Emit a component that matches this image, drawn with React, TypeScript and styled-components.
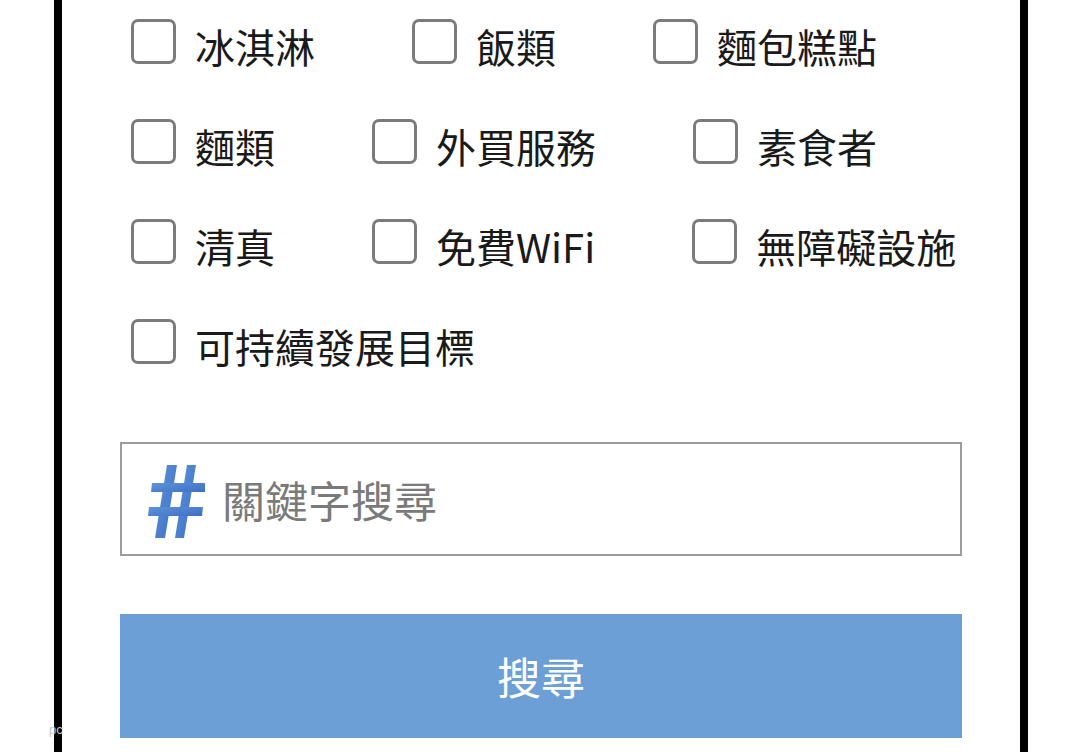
import React from "react";
import styled, { createGlobalStyle } from "styled-components";

const GlobalStyle = createGlobalStyle`
  html, body {
    margin: 0;
    padding: 0;
    background: #ffffff;
  }
  body {
    font-family: "Noto Sans CJK TC", "Noto Sans", sans-serif;
    overflow: hidden;
  }
  * { box-sizing: border-box; }
`;

const Page = styled.div`
  position: relative;
  width: 1080px;
  height: 752px;
  overflow: hidden;
`;

const Frame = styled.div`
  margin-left: 54px;
  width: 974px;
  min-height: 752px;
  border-left: 8px solid #000;
  border-right: 8px solid #000;
  padding: 19px 58px 0;
`;

const OptionList = styled.div`
  display: flex;
  flex-wrap: wrap;
  row-gap: 55px;
  column-gap: 97px;
  padding-left: 11px;
`;

const Option = styled.label`
  display: flex;
  align-items: center;
  gap: 19px;
  height: 45px;
  cursor: pointer;
`;

const Box = styled.span`
  display: block;
  flex: none;
  width: 45px;
  height: 45px;
  border: 3px solid #7b7b7b;
  border-radius: 7px;
  background: #fff;
`;

const Label = styled.span`
  font-size: 40px;
  line-height: 45px;
  color: #1a1a1a;
  white-space: nowrap;
  position: relative;
  top: 5px;
`;

const SearchBox = styled.div`
  margin-top: 78px;
  height: 114px;
  border: 2px solid #9c9c9c;
  display: flex;
  align-items: center;
  padding-left: 26px;
  gap: 17px;
`;

const HashIcon = styled.svg`
  flex: none;
  width: 57px;
  height: 73px;
  margin-top: 4px;
`;

const KeywordInput = styled.input`
  flex: 1;
  min-width: 0;
  border: none;
  outline: none;
  background: transparent;
  font-family: "Noto Sans CJK TC", "Noto Sans", sans-serif;
  font-size: 43px;
  color: #333;
  padding: 0;
  &::placeholder {
    color: #7a7a7a;
  }
`;

const SearchButton = styled.button`
  display: block;
  width: 100%;
  margin-top: 58px;
  height: 124px;
  border: none;
  background: #6b9fd5;
  color: #ffffff;
  font-family: "Noto Sans CJK TC", "Noto Sans", sans-serif;
  font-size: 44px;
  cursor: pointer;
`;

const Watermark = styled.span`
  position: absolute;
  left: 49px;
  top: 722px;
  font-family: "Liberation Sans", sans-serif;
  font-size: 13px;
  color: #c8c8c8;
`;

const options = [
  "冰淇淋",
  "飯類",
  "麵包糕點",
  "麵類",
  "外買服務",
  "素食者",
  "清真",
  "免費WiFi",
  "無障礙設施",
  "可持續發展目標",
];

export default function App() {
  return (
    <Page>
      <GlobalStyle />
      <Frame>
        <OptionList>
          {options.map((o) => (
            <Option key={o}>
              <Box />
              <Label>{o}</Label>
            </Option>
          ))}
        </OptionList>
        <SearchBox>
          <HashIcon viewBox="0 0 57 73">
            <defs>
              <linearGradient id="hashGrad" x1="0" y1="0" x2="1" y2="1">
                <stop offset="0" stopColor="#5e93dc" />
                <stop offset="1" stopColor="#3d6fc2" />
              </linearGradient>
            </defs>
            <g fill="url(#hashGrad)">
              <polygon points="19,0 29,0 17,73 7,73" />
              <polygon points="39,0 48,0 36,73 27,73" />
              <polygon points="4,18 57,18 57,27 3,27" />
              <polygon points="1,42 55,42 54,51 0,51" />
            </g>
          </HashIcon>
          <KeywordInput placeholder="關鍵字搜尋" />
        </SearchBox>
        <SearchButton>搜尋</SearchButton>
      </Frame>
      <Watermark>pc</Watermark>
    </Page>
  );
}
